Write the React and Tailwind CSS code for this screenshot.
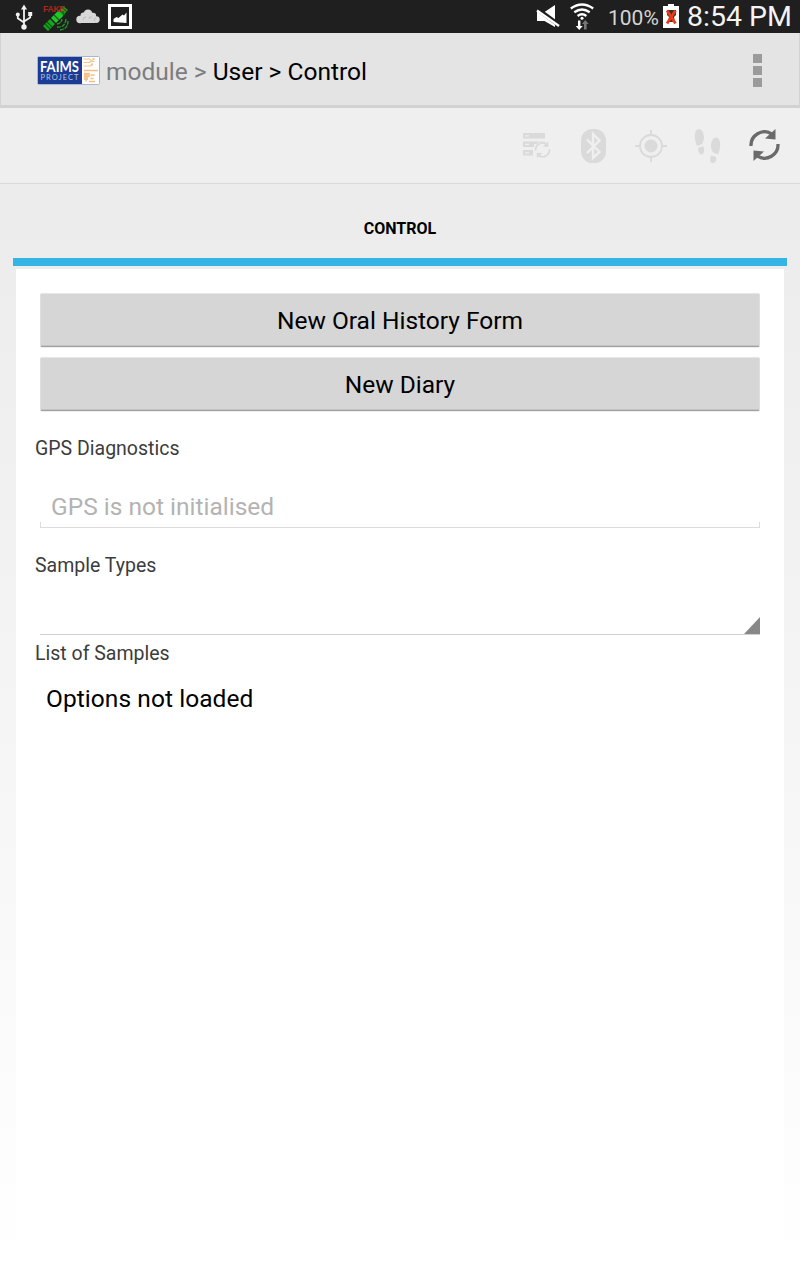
function UsbIcon() {
  return (
    <svg width="18" height="28" viewBox="0 0 18 28" fill="none" stroke="#f2f2f2" strokeWidth="1.8">
      <path d="M9 5v19M2.8 12v3.2L9 19.5M15.2 11v3.6L9 18.5" />
      <path d="M9 1.5l3 5H6z" fill="#f2f2f2" stroke="none" />
      <circle cx="9" cy="24" r="2.7" fill="#f2f2f2" stroke="none" />
      <circle cx="2.8" cy="11.5" r="2" fill="#f2f2f2" stroke="none" />
      <path d="M13.2 9h4v4h-4z" fill="#f2f2f2" stroke="none" />
    </svg>
  );
}

function SatelliteIcon() {
  return (
    <svg width="28" height="28" viewBox="0 0 28 28">
      <path d="M0 23l7-7 5 5-7 7zM14 9l6-6 5 4-7 8z" fill="#16a51c" />
      <path d="M8 15l7-7 5 5-7 7z" fill="#23c52b" />
      <path d="M2 21l5 5M4 19l5 5M17 7l5 5M19 4l5 5M11 12l5 5" stroke="#0b5f10" strokeWidth="1.2" />
      <path d="M14 24q8 1 9-8M17 27q8-1 8-9M14 21q4 0 5-5" fill="none" stroke="#1f9f26" strokeWidth="1.3" strokeDasharray="4 .8" />
      <text x="0" y="9" fontSize="8.5" fontWeight="700" fill="#a52a1d" fontFamily="Liberation Sans, sans-serif" textLength="22">FAKE</text>
    </svg>
  );
}

function CloudIcon() {
  return (
    <svg width="24" height="15" viewBox="0 0 24 15" fill="#d8d8d8">
      <circle cx="4" cy="10.5" r="3.7" />
      <circle cx="7.5" cy="6.5" r="3" />
      <circle cx="12" cy="5" r="4.5" />
      <circle cx="17" cy="7" r="3.2" />
      <circle cx="20.3" cy="10.6" r="3.4" />
      <path d="M4 7h15v7H4z" />
      <path d="M7 11q0-3 3-3M13 10q0-3 3-2M18 12q0-3 2-3" fill="none" stroke="#bbb" strokeWidth="1" />
    </svg>
  );
}

function PictureIcon() {
  return (
    <svg width="24" height="25" viewBox="0 0 24 25">
      <path d="M1.5 1.5h21v22h-21z" fill="none" stroke="#fff" strokeWidth="3" />
      <path d="M5.500 18v-3l3-2 2 1 4-3.500 1.500 1 2.500-3v10.500z" fill="#fff" />
    </svg>
  );
}

function MuteIcon() {
  return (
    <svg width="25" height="24" viewBox="0 0 25 24">
      <path d="M1 7h7.500L19 0v22L8.500 16H1z" fill="#fff" />
      <path d="M0 3l23 17" stroke="#202020" strokeWidth="4.600" />
      <path d="M1 5.500l22 15.500" stroke="#fff" strokeWidth="2.300" />
    </svg>
  );
}

function WifiIcon() {
  return (
    <svg width="24" height="28" viewBox="0 0 24 28" fill="none" stroke="#fff" strokeWidth="2.300">
      <path d="M.8 5.500q11.200-8 22.400 0M4.300 9.300q7.700-5.600 15.400 0M7.600 13q4.400-3.400 8.800 0" />
      <circle cx="12" cy="15.200" r="1.500" fill="#fff" stroke="none" />
      <path d="M8 17.500h2.400v5.500h2.300L9.200 27l-3.500-4H8z" fill="#fff" stroke="none" />
      <path d="M14 26.500v-5.500h-2l3.300-4 3.300 4h-2v5.500z" fill="#777" stroke="none" />
    </svg>
  );
}

function BatteryIcon() {
  return (
    <svg width="16" height="24" viewBox="0 0 16 24">
      <path d="M5 0h6v2h5v22H0V2h5z" fill="#fff" />
      <path d="M4 6h9v5l-2 2 1 5H5l1-5-2-2z" fill="#333" />
      <path d="M4 6.500l8.500 13M12.500 6.500L4 19.500" stroke="#ee3b16" strokeWidth="2.800" />
    </svg>
  );
}

function StatusBar() {
  return (
    <div className="flex h-[33px] items-center bg-[#1f1f1f] text-[#f4f4f4]">
      <div className="ml-[15px] shrink-0"><UsbIcon /></div>
      <div className="ml-[10px] shrink-0"><SatelliteIcon /></div>
      <div className="ml-[5px] shrink-0"><CloudIcon /></div>
      <div className="ml-2 shrink-0"><PictureIcon /></div>
      <div className="ml-[404px] shrink-0"><MuteIcon /></div>
      <div className="ml-[9px] shrink-0"><WifiIcon /></div>
      <span className="ml-[14px] w-[51px] shrink-0 whitespace-nowrap pt-[3px] text-[21px] leading-[30px] text-[#d5d5d5]">100%</span>
      <div className="ml-[4px] shrink-0 pb-px"><BatteryIcon /></div>
      <span className="ml-[8px] whitespace-nowrap pt-px text-[28.500px] leading-[32px]">8:54 PM</span>
    </div>
  );
}

function Logo() {
  return (
    <svg width="64" height="29" viewBox="0 0 64 29" className="mt-[2px]">
      <rect x=".5" y=".5" width="62" height="28" rx="1" fill="#fff" stroke="#a9b5d5" />
      <path d="M1 1h44v27H1z" fill="#1b3c94" />
      <text x="3" y="15.500" fontSize="16" fontWeight="700" fill="#fff" fontFamily="Lato, sans-serif" textLength="39" lengthAdjust="spacingAndGlyphs">FAIMS</text>
      <text x="3.500" y="24" fontSize="7.500" fill="#b7c2df" fontFamily="Lato, sans-serif" textLength="38">PROJECT</text>
      <path d="M46.500 3h6l3 2.500h2M46.500 6.500h6l3-2.500M46.500 10h7l2-2" fill="none" stroke="#f5c48e" strokeWidth="1.200" />
      <path d="M47 14.500h14M47 17.500h5v3h-3v5M53.500 19h4M53.500 22.500h3M52 25.500h6" fill="none" stroke="#f5bd80" strokeWidth="1.500" />
      <path d="M55.500 2h2v2h-2zM54 7.500h2v2h-2zM47 18h4v6h-4z" fill="#f5c48e" />
    </svg>
  );
}

function ActionBar() {
  return (
    <header className="flex h-[75px] items-center border-x border-b-[3px] border-[#d2d2d2] bg-[#e4e4e4] pl-[36px] pt-px">
      <Logo />
      <h1 className="ml-[5px] mt-[4px] grow whitespace-nowrap text-[24.500px] leading-[30px] text-black">
        <span className="text-[#7c7c80]">module &gt; </span>User &gt; Control
      </h1>
      <div className="mr-[37px] mt-[2px] flex flex-col gap-[3px]">
        <i className="size-[9px] bg-[#9b9b9b]" />
        <i className="size-[9px] bg-[#9b9b9b]" />
        <i className="size-[9px] bg-[#9b9b9b]" />
      </div>
    </header>
  );
}

function SyncArrows() {
  return (
    <g>
      <path d="M2 17A13.500 13.500 0 0 1 22.500 4.800M29 15A13.500 13.500 0 0 1 8.500 27.200" fill="none" stroke="currentColor" strokeWidth="3.300" />
      <path d="M26.500 0v10.500L16 9.500zM4.500 32V21.500L15 22.500z" fill="currentColor" />
    </g>
  );
}

function Toolbar() {
  return (
    <div className="flex h-[76px] items-center border-b border-[#d9d9d9] bg-[#efefef] pl-[522px] text-[#dadada]">
      <svg width="29" height="28" viewBox="0 0 29 28" className="shrink-0">
        <path d="M1 1h22v5.500H1zM1 9.500h22V12H12v3H1zM1 18h10v5.500H1z" fill="currentColor" />
        <path d="M3 3.800h4M3 12.300h4M3 20.800h4" stroke="#efefef" strokeWidth="1.200" />
        <circle cx="20.500" cy="18" r="8.500" fill="#efefef" />
        <g transform="translate(12.500 9.500) scale(.52)"><SyncArrows /></g>
      </svg>
      <svg width="25" height="34" viewBox="0 0 25 34" className="ml-[30px] shrink-0">
        <rect width="25" height="34" rx="11.500" fill="currentColor" />
        <path d="M6 10.500l12.500 12.500-6.500 6V5l6.500 6.500L6 24" fill="none" stroke="#efefef" strokeWidth="2.400" />
      </svg>
      <svg width="32" height="32" viewBox="0 0 32 32" className="ml-[29px] shrink-0" fill="none" stroke="currentColor" strokeWidth="1.800">
        <circle cx="16" cy="16" r="11" />
        <circle cx="16" cy="16" r="6.500" fill="currentColor" stroke="none" />
        <path d="M16 0v5M16 27v5M0 16h5M27 16h5" />
      </svg>
      <svg width="27" height="36" viewBox="0 0 27 36" className="ml-[27px] shrink-0" fill="currentColor">
        <path d="M5 1C8 1 10 5 10 10q0 3-2 6l-5 2Q1 14 .8 9 .8 1 5 1zM4 20l5-2q2 3 1 6t-3 2.500Q4 25 4 20z" />
        <path d="M22 9.500c-3 0-5 4-5 9q0 3 2 6l5 2q2-4 2.200-9 0-8-4.200-8zM17 27.500l5 1.500q1 6-3.500 6-2 0-2.500-3z" />
      </svg>
      <svg width="31" height="33" viewBox="0 0 31 33" className="ml-[28px] shrink-0 text-[#6a6a6a]"><SyncArrows /></svg>
    </div>
  );
}

function FormButton({ children }) {
  return (
    <button className="h-[54px] w-full rounded-[2px] border border-t-[#e6e6e6] border-x-[#dedede] border-b-[#a0a0a0] bg-[#d6d6d6] pt-[2px] text-[24.500px] text-black shadow-[inset_0_-1px_0_#c3c3c3,0_1px_0_#eeeeee]">
      {children}
    </button>
  );
}

function Label({ children }) {
  return <div className="pl-[19px] text-[19.500px] leading-[24px] text-[#3c3c3c]">{children}</div>;
}

export default function App() {
  return (
    <div className="flex h-[1280px] w-[800px] flex-col overflow-hidden bg-linear-to-b from-[#e8e8e8] to-white font-[Roboto,sans-serif]">
      <StatusBar />
      <ActionBar />
      <Toolbar />
      <div className="mx-[13px] h-[82px] border-b-8 border-[#33b5e5] pt-[33px] text-center text-[16px] leading-[24px] font-bold text-black">CONTROL</div>
      <main className="mx-4 mt-[3px] grow bg-white">
        <div className="flex flex-col gap-[10px] px-6 pb-[26px] pt-6">
          <FormButton>New Oral History Form</FormButton>
          <FormButton>New Diary</FormButton>
        </div>
        <Label>GPS Diagnostics</Label>
        <div className="mx-6 mt-[32px] pl-[11px] text-[24.500px] leading-[28px] text-[#b3b3b3]">GPS is not initialised</div>
        <div className="mx-6 mb-[26px] mt-px h-[6px] border-x border-b border-[#dcdcdc]" />
        <Label>Sample Types</Label>
        <div className="mx-6 mb-[7px] flex h-[57px] items-end justify-end border-b border-[#d2d2d2]">
          <svg width="16" height="17" viewBox="0 0 16 17"><path d="M16 0v17H0z" fill="#888" /></svg>
        </div>
        <Label>List of Samples</Label>
        <div className="pl-[30px] pt-[18px] text-[24.500px] leading-[30px] tracking-[0.060px] text-black">Options not loaded</div>
      </main>
    </div>
  );
}
